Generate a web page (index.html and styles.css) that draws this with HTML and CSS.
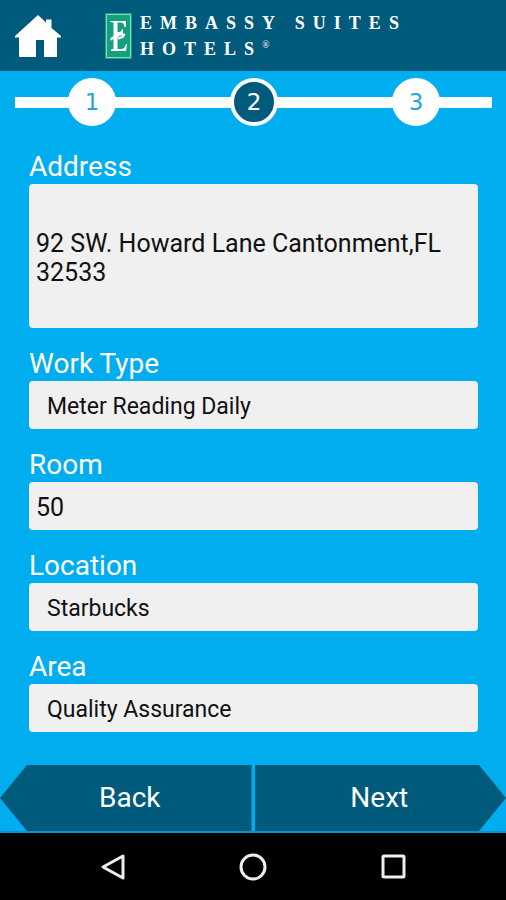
FILE: index.html
```html
<!DOCTYPE html>
<html lang="en">
<head>
<meta charset="utf-8">
<meta name="viewport" content="width=device-width, initial-scale=1">
<title>Embassy Suites Hotels</title>
<link rel="stylesheet" href="styles.css">
</head>
<body>
<header class="header">
  <a class="home" href="#" aria-label="Home">
    <svg width="46" height="44" viewBox="0 0 46 44"><path fill="#fff" d="M23 1 31 8.500V5.500h5.500v8.500l9.500 8v1.500h-4V43H29V26h-8v17H4V23.500H0V22z"/></svg>
  </a>
  <div class="brand">
    <svg class="emblem" width="27" height="46" viewBox="0 0 27 46" aria-hidden="true">
      <path fill="#12a07f" d="M0 0h27v46H0z"/>
      <path fill="none" stroke="#8fd8c4" d="M1.500 1.500h24v43h-24z"/>
      <path fill="#fff" d="M5 8h16v6h-1.500c-.5-3-1.500-4.500-4-4.500h-3V19h1.500c2 0 2.500-1 3-3h1v5l-5 2h-.5V36H16c3 0 4-2 5-5h1l-1 7H6v-1.500l2.500-.5V25l-3 1.500V25l3-2V9.500L5 9z"/>
      <path fill="none" stroke="#fff" stroke-width="2" d="M6 27c2-4 4 0 7-4s4 1 7-2M13 26c3-3 4 0 6-4"/>
    </svg>
    <div class="wordmark"><span>EMBASSY SUITES</span><span>HOTELS<sup>®</sup></span></div>
  </div>
</header>
<main class="main">
  <ol class="steps">
    <li class="step">1</li>
    <li class="step current" aria-current="step">2</li>
    <li class="step">3</li>
  </ol>
  <form class="form" id="work-form">
    <div class="field">
      <label for="address">Address</label>
      <textarea id="address" class="control address">92 SW. Howard Lane Cantonment,FL 32533</textarea>
    </div>
    <div class="field">
      <label for="work-type">Work Type</label>
      <select id="work-type" class="control"><option>Meter Reading Daily</option></select>
    </div>
    <div class="field">
      <label for="room">Room</label>
      <input id="room" class="control" type="text" value="50">
    </div>
    <div class="field">
      <label for="location">Location</label>
      <select id="location" class="control"><option>Starbucks</option></select>
    </div>
    <div class="field">
      <label for="area">Area</label>
      <select id="area" class="control"><option>Quality Assurance</option></select>
    </div>
  </form>
  <div class="actions">
    <button class="action back" type="button">Back</button>
    <button class="action next" type="submit" form="work-form">Next</button>
  </div>
</main>
<nav class="system-nav" aria-label="System">
  <button type="button" aria-label="Back"><svg width="28" height="28" viewBox="0 0 28 28"><path d="M4 14 24 3v22z"/></svg></button>
  <button type="button" aria-label="Home"><svg width="28" height="28" viewBox="0 0 28 28"><circle cx="14" cy="14" r="12"/></svg></button>
  <button type="button" aria-label="Overview"><svg width="28" height="28" viewBox="0 0 28 28"><rect x="4" y="3" width="21" height="21" rx="1"/></svg></button>
</nav>
</body>
</html>
```

FILE: styles.css
```css
* { box-sizing: border-box; }

body {
  margin: 0;
  min-height: 100vh;
  display: flex;
  flex-direction: column;
  background: #00aeef;
  color: #fff;
  font-family: Roboto, "Liberation Sans", sans-serif;
}

.header {
  display: flex;
  align-items: center;
  gap: 44px;
  height: 71px;
  padding: 0 15px;
  background: #005a7b;
}

.home svg, .emblem, .system-nav svg { display: block; }

.brand {
  display: flex;
  align-items: center;
  gap: 8px;
}

.wordmark {
  display: flex;
  flex-direction: column;
  font: bold 18px/26px "Liberation Serif", serif;
  letter-spacing: 8px;
  white-space: nowrap;
}

.wordmark sup {
  font-size: 10px;
  line-height: 1;
  opacity: 0.8;
}

.main {
  flex: 1;
  display: flex;
  flex-direction: column;
}

.steps {
  display: flex;
  justify-content: space-between;
  margin: 7px 14px 0 15px;
  padding: 0 52px 0 53px;
  list-style: none;
  background: linear-gradient(#fff, #fff) center / 100% 11px no-repeat;
}

.step {
  width: 48px;
  height: 48px;
  border: 4px solid #fff;
  border-radius: 50%;
  background: #fff;
  color: #22a7dc;
  font: 23px/40px "DejaVu Sans", sans-serif;
  text-align: center;
}

.step.current {
  background: #005a7b;
  color: #fff;
}

.form {
  display: flex;
  flex-direction: column;
  gap: 19px;
  padding: 24px 28px 0 29px;
}

.field {
  display: flex;
  flex-direction: column;
}

.field label {
  font-size: 28px;
  line-height: 34px;
}

.control {
  width: 100%;
  height: 48px;
  margin: 0;
  padding: 2px 7px 0;
  border: 0;
  border-radius: 4px;
  background: #f0f0f0;
  color: #111;
  font: 25px/29px Roboto, "Liberation Sans", sans-serif;
}

select.control {
  appearance: none;
  padding: 2px 18px 0;
  font-size: 23px;
}

textarea.address {
  display: block;
  height: 144px;
  padding: 45px 7px 0;
  resize: none;
  overflow: hidden;
}

.actions {
  display: grid;
  grid-template-columns: 1fr 1fr;
  gap: 3px;
  margin-top: auto;
  border-bottom: 2px solid #128fc8;
}

.action {
  height: 66px;
  padding: 0;
  border: 0;
  background: #005a7b;
  color: #fff;
  font: 28px/34px Roboto, "Liberation Sans", sans-serif;
}

.back {
  padding-left: 8px;
  clip-path: polygon(27px 0, 100% 0, 100% 100%, 27px 100%, 0 50%);
}

.next {
  padding-right: 2px;
  clip-path: polygon(0 0, calc(100% - 27px) 0, 100% 50%, calc(100% - 27px) 100%, 0 100%);
}

.system-nav {
  display: flex;
  justify-content: center;
  align-items: center;
  gap: 112px;
  height: 67px;
  background: #000;
}

.system-nav button {
  padding: 0;
  border: 0;
  background: none;
}

.system-nav svg {
  fill: none;
  stroke: #eee;
  stroke-width: 3;
  stroke-linejoin: round;
}
```
